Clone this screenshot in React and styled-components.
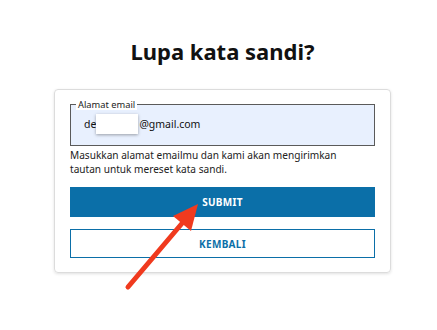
import styled, { createGlobalStyle } from 'styled-components';

const Global = createGlobalStyle`
body {
  margin: 0;
  background: #fff;
  font-family: "Noto Sans", "Open Sans", sans-serif;
  color: #1a1a1a;
}
`

const Page = styled.div`
position: relative;
width: 437px;
height: 330px;
padding-left: 8px;
box-sizing: border-box;
display: flex;
flex-direction: column;
align-items: center;
`

const Title = styled.h1`
margin: 36px 0 0;
font-size: 22px;
font-weight: 700;
line-height: 30px;
color: #111;
`

const Card = styled.div`
margin-top: 23px;
width: 337px;
box-sizing: border-box;
border: 1px solid #dcdcdc;
border-radius: 4px;
box-shadow: 0 1px 3px rgba(0,0,0,0.12);
padding: 9px 15px 14px;
display: flex;
flex-direction: column;
`

const Field = styled.fieldset`
margin: 0;
padding: 0 13px 0 13px;
height: 47px;
box-sizing: border-box;
border: 1px solid #5a5a5a;
background: #e8f0fe;
display: flex;
align-items: center;
`

const Legend = styled.legend`
font-size: 9.3px;
line-height: 11px;
padding: 0 2px;
margin-left: -8px;
color: #222;
background: #fff;
`

const Value = styled.div`
font-size: 10.5px;
color: #111;
display: flex;
align-items: center;
margin-top: 4px;
`

const Mask = styled.span`
display: inline-block;
width: 42px;
height: 20px;
background: #fff;
box-shadow: 0 1px 3px rgba(0,0,0,0.35);
margin: 0 1px 0 0;
`

const Help = styled.p`
margin: 2px 0 0;
max-width: 290px;
font-size: 10.1px;
line-height: 14px;
color: #222;
`

const Button = styled.button`
height: ${p => p.$h}px;
margin-top: ${p => p.$top}px;
border: 1px solid #0b6fa8;
background: ${p => p.$primary ? '#0b6fa8' : '#fff'};
color: ${p => p.$primary ? '#fff' : '#0b6fa8'};
font-family: "Noto Sans", sans-serif;
font-size: 10px;
font-weight: 700;
letter-spacing: 0.3px;
cursor: pointer;
`

const Pointer = styled.svg`
position: absolute;
left: 0;
top: 0;
pointer-events: none;
`

function App(){
    return <>
    <Global/>
    <Page>
        <Title>Lupa kata sandi?</Title>
        <Card>
            <Field>
                <Legend>Alamat email</Legend>
                <Value>de<Mask/>@gmail.com</Value>
            </Field>
            <Help>Masukkan alamat emailmu dan kami akan mengirimkan tautan untuk mereset kata sandi.</Help>
            <Button $primary $h={30} $top={11}>SUBMIT</Button>
            <Button $h={29} $top={12}>KEMBALI</Button>
        </Card>
        <Pointer width="437" height="330">
            <line x1="128" y1="287" x2="184" y2="221" stroke="#f03a1e" strokeWidth="5" strokeLinecap="round"/>
            <polygon points="198,204 173,216 191,231" fill="#f03a1e"/>
        </Pointer>
    </Page>
    </>
}

export default App;
